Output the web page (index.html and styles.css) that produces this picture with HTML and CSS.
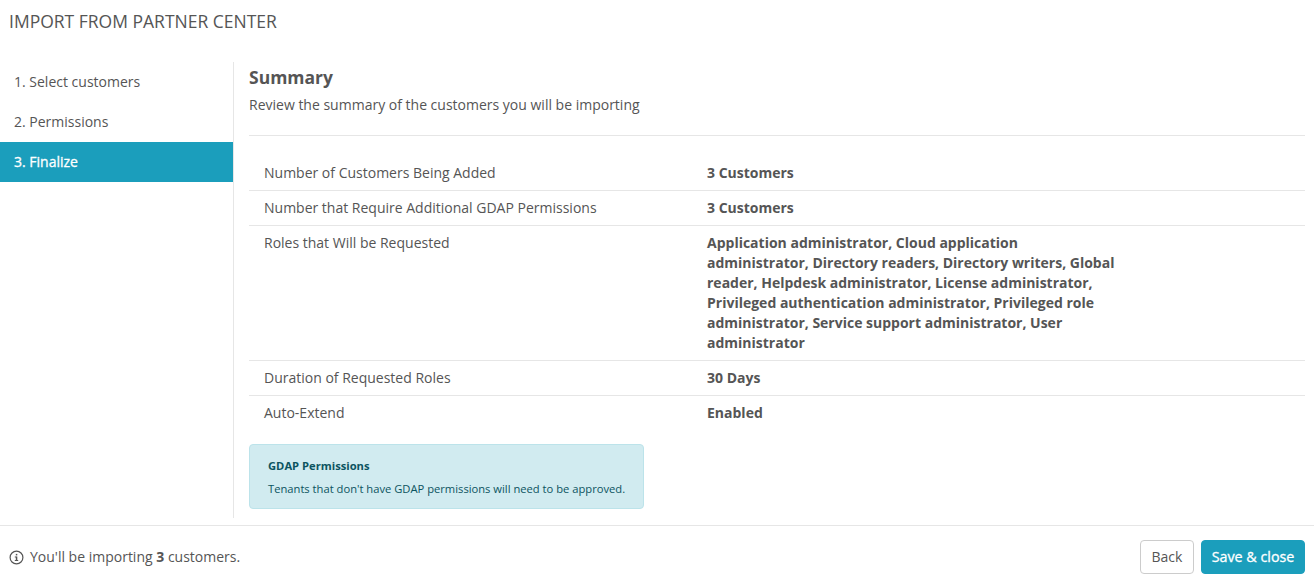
FILE: index.html
```html
<!DOCTYPE html>
<html lang="en">
<head>
<meta charset="utf-8">
<title>Import from Partner Center</title>
<link rel="stylesheet" href="styles.css">
</head>
<body>
<div class="page">
  <h1 class="title">IMPORT FROM PARTNER CENTER</h1>
  <div class="wizard">
    <nav class="steps">
      <div class="step">1. Select customers</div>
      <div class="step">2. Permissions</div>
      <div class="step active">3. Finalize</div>
    </nav>
    <main class="content">
      <h2 class="heading">Summary</h2>
      <p class="sub">Review the summary of the customers you will be importing</p>
      <div class="rows">
        <div class="row"><div class="label">Number of Customers Being Added</div><div class="value">3 Customers</div></div>
        <div class="row"><div class="label">Number that Require Additional GDAP Permissions</div><div class="value">3 Customers</div></div>
        <div class="row"><div class="label">Roles that Will be Requested</div><div class="value">Application administrator, Cloud application administrator, Directory readers, Directory writers, Global reader, Helpdesk administrator, License administrator, Privileged authentication administrator, Privileged role administrator, Service support administrator, User administrator</div></div>
        <div class="row"><div class="label">Duration of Requested Roles</div><div class="value">30 Days</div></div>
        <div class="row"><div class="label">Auto-Extend</div><div class="value">Enabled</div></div>
      </div>
      <div class="notice">
        <div class="notice-title">GDAP Permissions</div>
        <div class="notice-text">Tenants that don't have GDAP permissions will need to be approved.</div>
      </div>
    </main>
  </div>
  <footer class="footer">
    <div class="status">
      <svg class="info" width="15" height="15" viewBox="0 0 15 15" aria-hidden="true"><circle cx="7.5" cy="7.5" r="6.4" fill="none" stroke="#555" stroke-width="1.2"/><rect x="6.8" y="6.5" width="1.5" height="4.1" fill="#555"/><rect x="5.8" y="6.5" width="1.5" height="1" fill="#555"/><rect x="5.8" y="10" width="3.4" height="1" fill="#555"/><rect x="6.8" y="3.9" width="1.5" height="1.5" fill="#555"/></svg>
      <span>You'll be importing <b>3</b> customers.</span>
    </div>
    <div class="actions">
      <button class="btn">Back</button>
      <button class="btn primary">Save &amp; close</button>
    </div>
  </footer>
</div>
</body>
</html>
```
FILE: styles.css
```css
* { box-sizing: border-box; }
html, body { margin: 0; padding: 0; }
body {
  background: #fff;
  color: #555;
  font-family: "Open Sans", sans-serif;
  font-size: 14px;
  line-height: 20px;
}
.page { width: 1314px; height: 582px; overflow: hidden; }
.title {
  margin: 0;
  height: 62px;
  padding: 10px 0 0 9px;
  font-size: 17.5px;
  line-height: 22px;
  font-weight: 400;
}
.wizard { display: flex; height: 456px; }
.steps { width: 234px; flex: none; border-right: 1px solid #e6e6e6; }
.step { height: 40px; padding: 10px 14px; }
.step.active { background: #1b9ebc; color: #fff; -webkit-text-stroke: 0.3px #fff; }
.content { flex: 1; padding: 0 9px 0 15px; min-width: 0; }
.heading { margin: 3px 0 0; font-size: 17.5px; line-height: 24px; font-weight: 700; }
.sub { margin: 6px 0 0; }
.rows { margin-top: 20px; border-top: 1px solid #e6e6e6; padding-top: 27px; }
.row { display: flex; padding: 7px 0 7px 15px; border-bottom: 1px solid #e6e6e6; }
.row:first-child { padding-top: 0; }
.row:last-child { border-bottom: 0; }
.label { width: 443px; flex: none; }
.value { width: 412px; flex: none; font-weight: 700; }
.notice {
  width: 395px;
  height: 65px;
  margin-top: 14px;
  padding: 12px 0 12px 18px;
  background: #d1ebf0;
  border: 1px solid #bce3ea;
  border-radius: 4px;
  color: #0c5460;
  font-size: 11.2px;
}
.notice-title { font-weight: 700; line-height: 18px; }
.notice-text { margin-top: 5px; line-height: 18px; white-space: nowrap; }
.footer {
  height: 57px;
  margin-top: 7px;
  border-top: 1px solid #e6e6e6;
  padding: 14px 9px 0;
  display: flex;
  justify-content: space-between;
}
.status { display: flex; align-items: center; gap: 6px; height: 34px; }
.info { flex: none; }
.actions { display: flex; gap: 7px; }
.btn {
  height: 34px;
  width: 54px;
  padding: 0;
  border: 1px solid #ccc;
  border-radius: 4px;
  background: #fff;
  color: #555;
  font: 400 14px/20px "Open Sans", sans-serif;
}
.btn.primary {
  background: #1b9ebc;
  border-color: #1b9ebc;
  color: #fff;
  width: 104px;
  font-size: 14.3px;
  -webkit-text-stroke: 0.3px #fff;
}
```
